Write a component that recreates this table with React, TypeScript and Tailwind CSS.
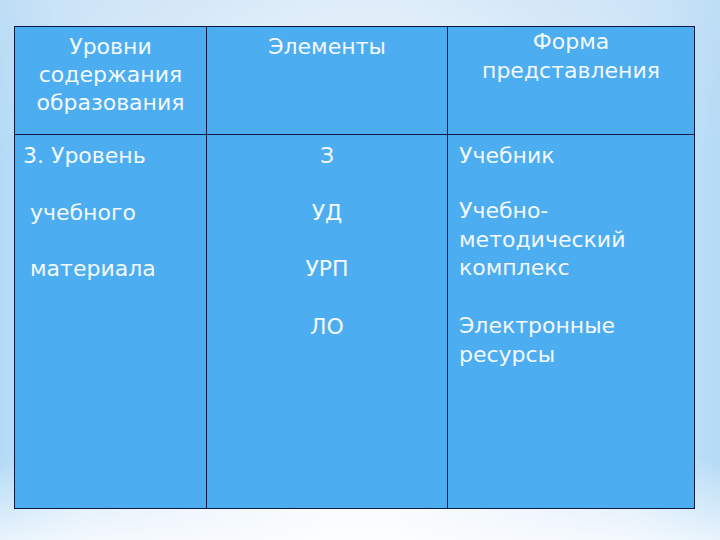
export default function App() {
  const font = { fontFamily: '"DejaVu Sans", "Liberation Sans", sans-serif' };
  return (
    <div
      className="w-[720px] h-[540px] overflow-hidden bg-[linear-gradient(to_right,#b3daf6_0%,#d6e9f9_12%,#f4f9fe_45%,#f4f9fe_55%,#d6e9f9_88%,#b3daf6_100%)]"
      style={font}
    >
      <div className="w-full h-full pt-[26px] pl-[14px] bg-[linear-gradient(to_bottom,rgba(200,225,245,0.5)_0%,rgba(255,255,255,0)_30%,rgba(255,255,255,0)_85%,rgba(255,255,255,0.7)_100%)]">
        <div className="w-[681px] h-[483px] border-[1.5px] border-[#0b1b45] bg-[#4dadf1] text-[#f3f9fd] text-[22px] leading-[29px] grid grid-cols-[192px_241px_1fr] grid-rows-[108px_1fr]">
          <div className="border-r-[1.5px] border-b-[1.5px] border-[#0b1b45] text-center pt-[5px]">
            <div>Уровни</div>
            <div className="-mt-[1px]">содержания</div>
            <div className="-mt-[1px]">образования</div>
          </div>
          <div className="border-r-[1.5px] border-b-[1.5px] border-[#0b1b45] text-center pt-[5px]">
            Элементы
          </div>
          <div className="border-b-[1.5px] border-[#0b1b45] text-center">
            <div>Форма</div>
            <div>представления</div>
          </div>

          <div className="border-r-[1.5px] border-[#0b1b45] pt-[6px]">
            <div className="pl-[8px]">3. Уровень</div>
            <div className="pl-[15px] mt-[28px]">учебного</div>
            <div className="pl-[15px] mt-[27px]">материала</div>
          </div>
          <div className="border-r-[1.5px] border-[#0b1b45] pt-[6px] text-center">
            <div>З</div>
            <div className="mt-[28px]">УД</div>
            <div className="mt-[27px]">УРП</div>
            <div className="mt-[29px]">ЛО</div>
          </div>
          <div className="pt-[6px] pl-[11px]">
            <div>Учебник</div>
            <div className="mt-[26px]">
              <div>Учебно-</div>
              <div>методический</div>
              <div className="-mt-[1px]">комплекс</div>
            </div>
            <div className="mt-[29px]">
              <div>Электронные</div>
              <div>ресурсы</div>
            </div>
          </div>
        </div>
      </div>
    </div>
  );
}
